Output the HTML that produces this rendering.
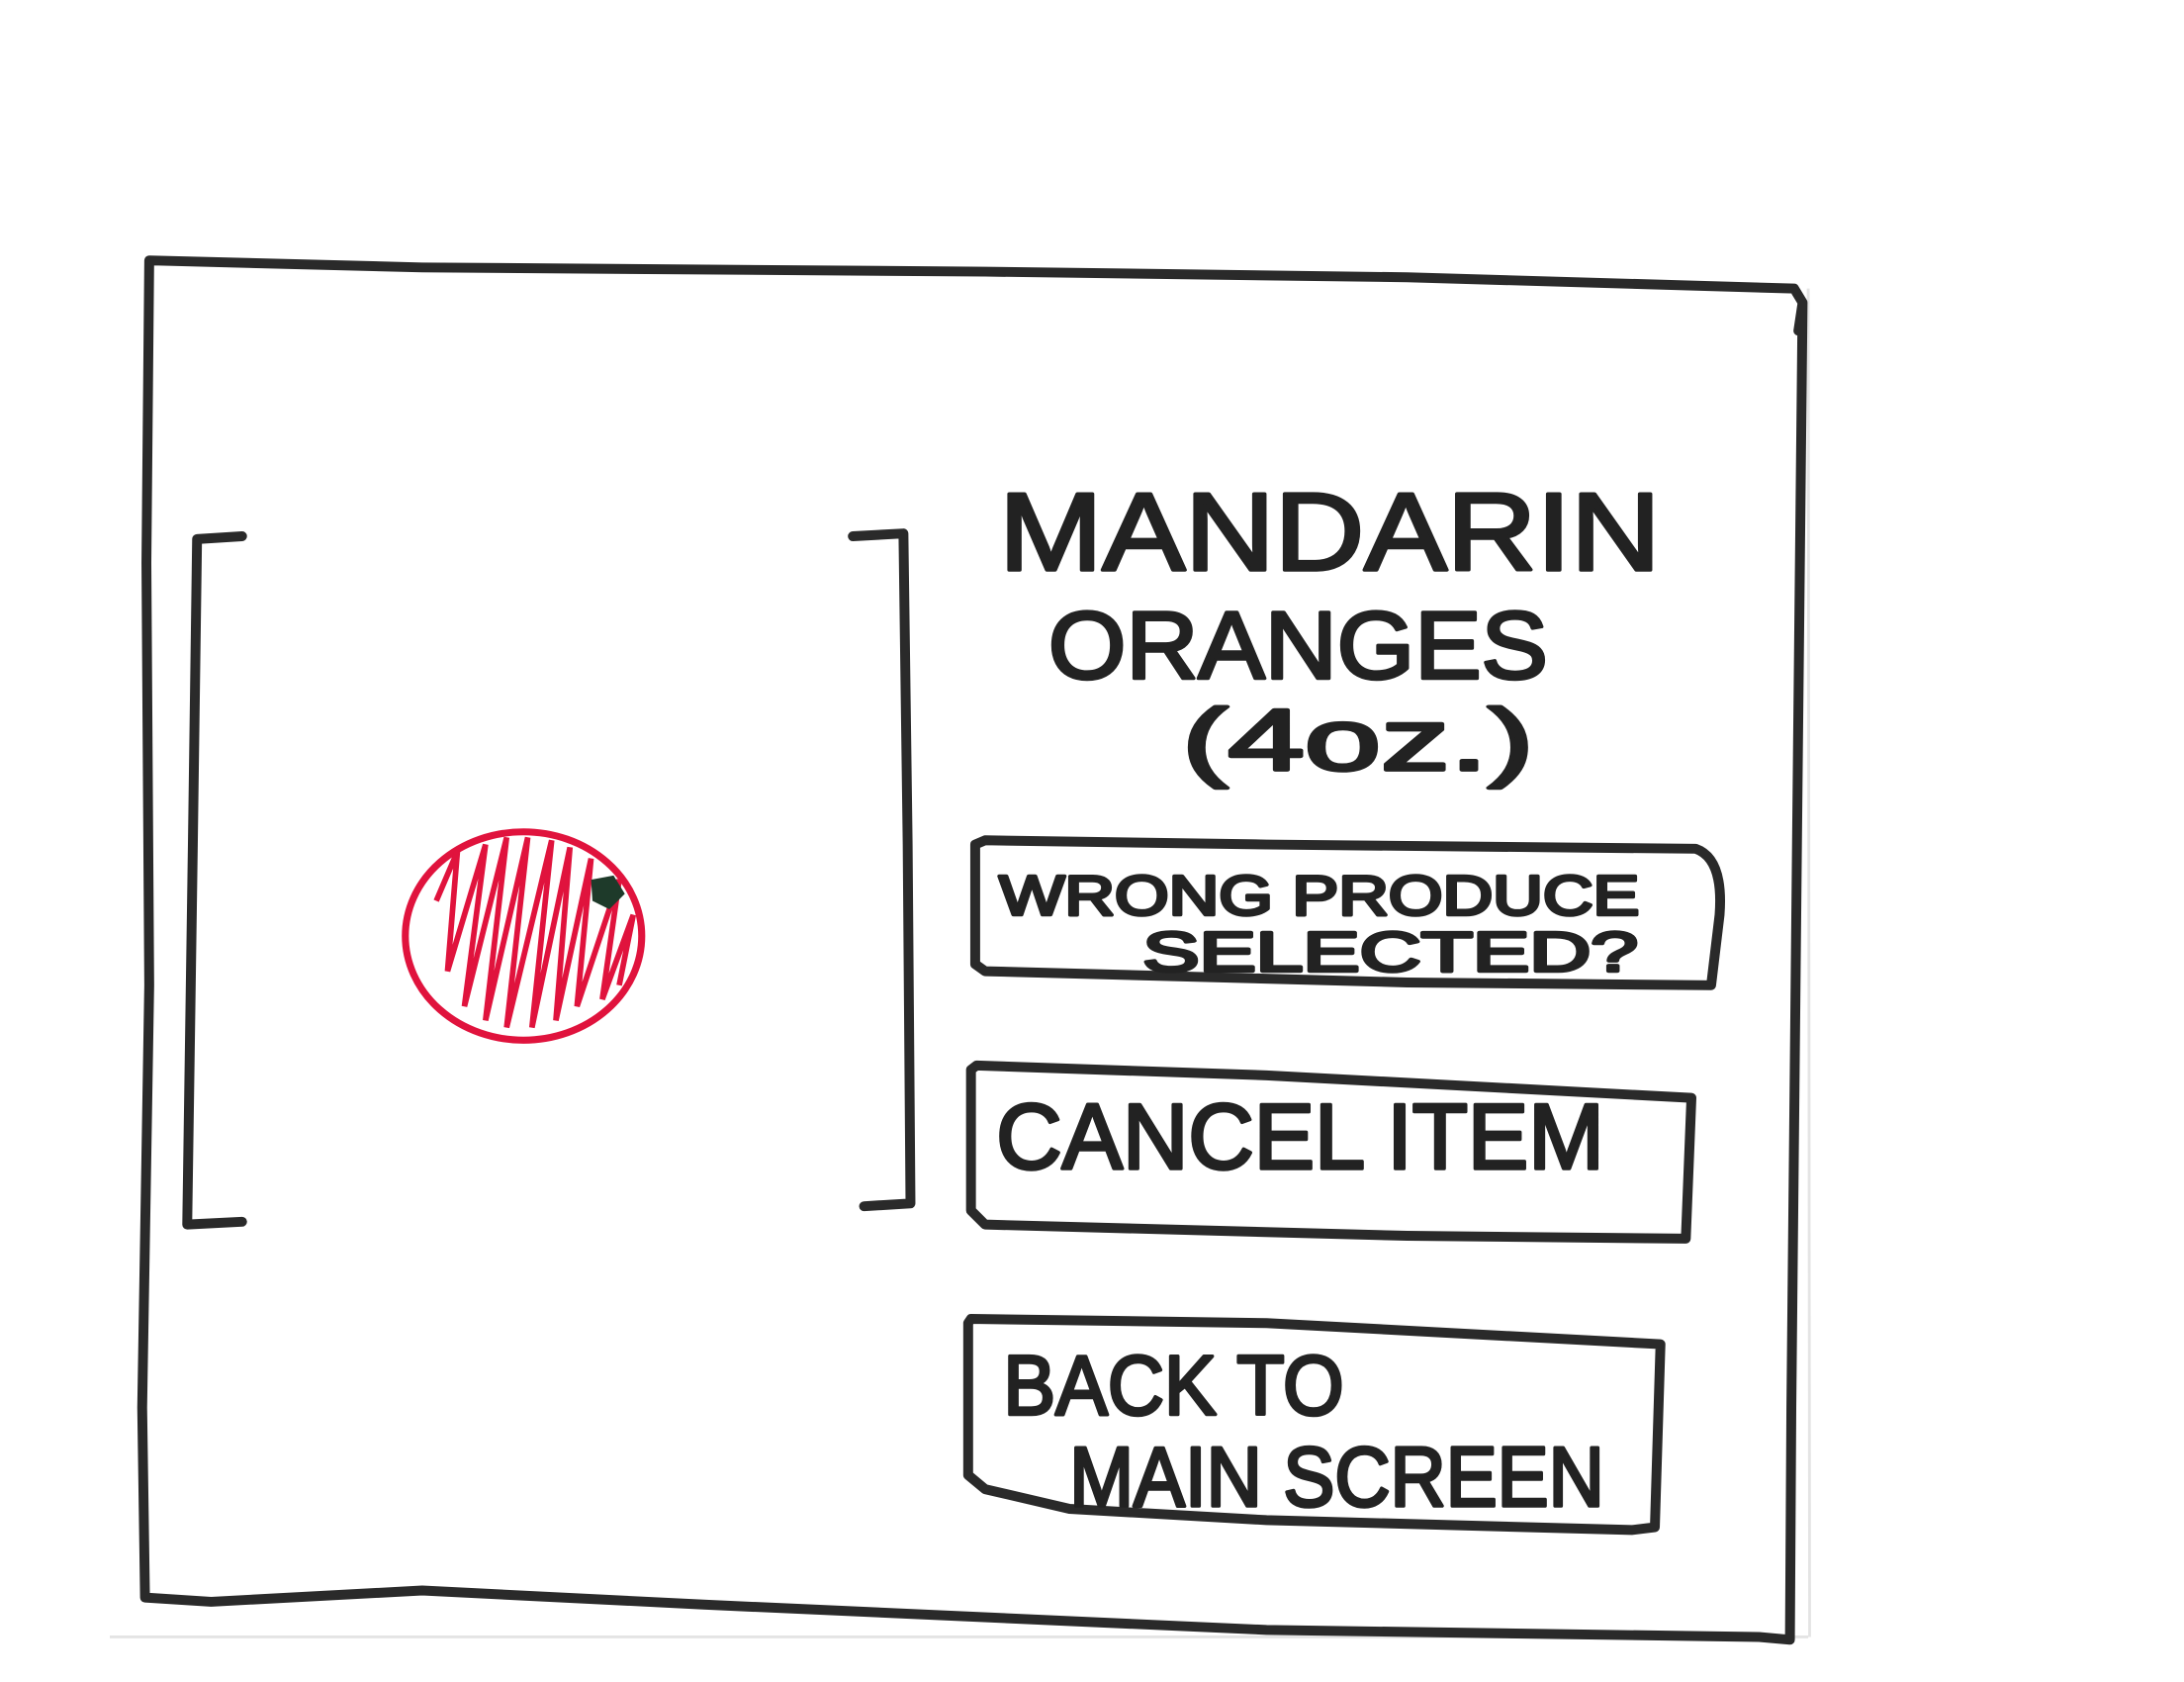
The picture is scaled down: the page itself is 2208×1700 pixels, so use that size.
<!DOCTYPE html>
<html><head><meta charset="utf-8"><style>
html,body{margin:0;padding:0;background:#fff;}
svg{display:block;}
text{font-family:"Liberation Sans",sans-serif;fill:#222;stroke:#222;stroke-width:2.5;stroke-linejoin:round;}
</style></head><body>
<svg width="2208" height="1700" viewBox="0 0 1552 1195" xmlns="http://www.w3.org/2000/svg">
<rect width="1552" height="1195" fill="#fff"/>
<path d="M78 1163 L1285 1163 M1285 205 L1286 1163" stroke="#e4e4e4" stroke-width="2" fill="none"/>
<g fill="none" stroke="#2a2a2a" stroke-width="7" stroke-linecap="round" stroke-linejoin="round">
<path d="M106 185 L300 190 L700 193 L1000 197 L1275 205 L1281 215 L1278 235 M1281 215 L1277 600 L1273 1000 L1272 1165 L1250 1163 L900 1158 L500 1140 L300 1130 L150 1138 L103 1135 L101 1000 L106 700 L104 400 L106 185"/>
<path d="M172 381 L140 383 L137 600 L133 870 L172 868"/>
<path d="M606 381 L642 379 L645 600 L647 855 L614 857"/>
<path d="M700 597 L900 600 L1205 603 Q1225 610 1222 650 L1216 700 L1000 698 L700 690 L693 685 L693 600 Z"/>
<path d="M694 757 L900 764 L1202 780 L1198 880 L1000 878 L700 870 L690 860 L690 760 Z"/>
<path d="M690 937 L900 940 L1180 955 L1176 1085 L1160 1087 L900 1080 L760 1072 L700 1058 L688 1048 L688 940 Z"/>
</g>
<ellipse cx="372" cy="665" rx="84" ry="74" fill="none" stroke="#e0133d" stroke-width="5"/>
<g stroke="#e0133d" stroke-width="4" fill="none">
<path d="M310 640 L325 605 L318 690 L345 600 L330 715 L360 595 L345 725 L375 595 L360 730 L392 597 L378 730 L405 602 L395 725 L420 610 L410 715 L440 625 L428 710 L450 650 L440 700"/>
</g>
<path d="M420 625 L436 622 L444 635 L433 646 L421 640 Z" fill="#1e3a2a"/>
<text x="710" y="405" font-size="78" textLength="470" lengthAdjust="spacingAndGlyphs">MANDARIN</text>
<text x="745" y="482" font-size="68" textLength="355" lengthAdjust="spacingAndGlyphs">ORANGES</text>
<text x="840" y="547" font-size="62" textLength="250" lengthAdjust="spacingAndGlyphs">(4oz.)</text>
<text x="710" y="650" font-size="40" textLength="455" lengthAdjust="spacingAndGlyphs">WRONG PRODUCE</text>
<text x="812" y="690" font-size="40" textLength="352" lengthAdjust="spacingAndGlyphs">SELECTED?</text>
<text x="708" y="830" font-size="66" textLength="432" lengthAdjust="spacingAndGlyphs">CANCEL ITEM</text>
<text x="713" y="1005" font-size="60" textLength="242" lengthAdjust="spacingAndGlyphs">BACK TO</text>
<text x="760" y="1070" font-size="60" textLength="380" lengthAdjust="spacingAndGlyphs">MAIN SCREEN</text>
</svg>
</body></html>
